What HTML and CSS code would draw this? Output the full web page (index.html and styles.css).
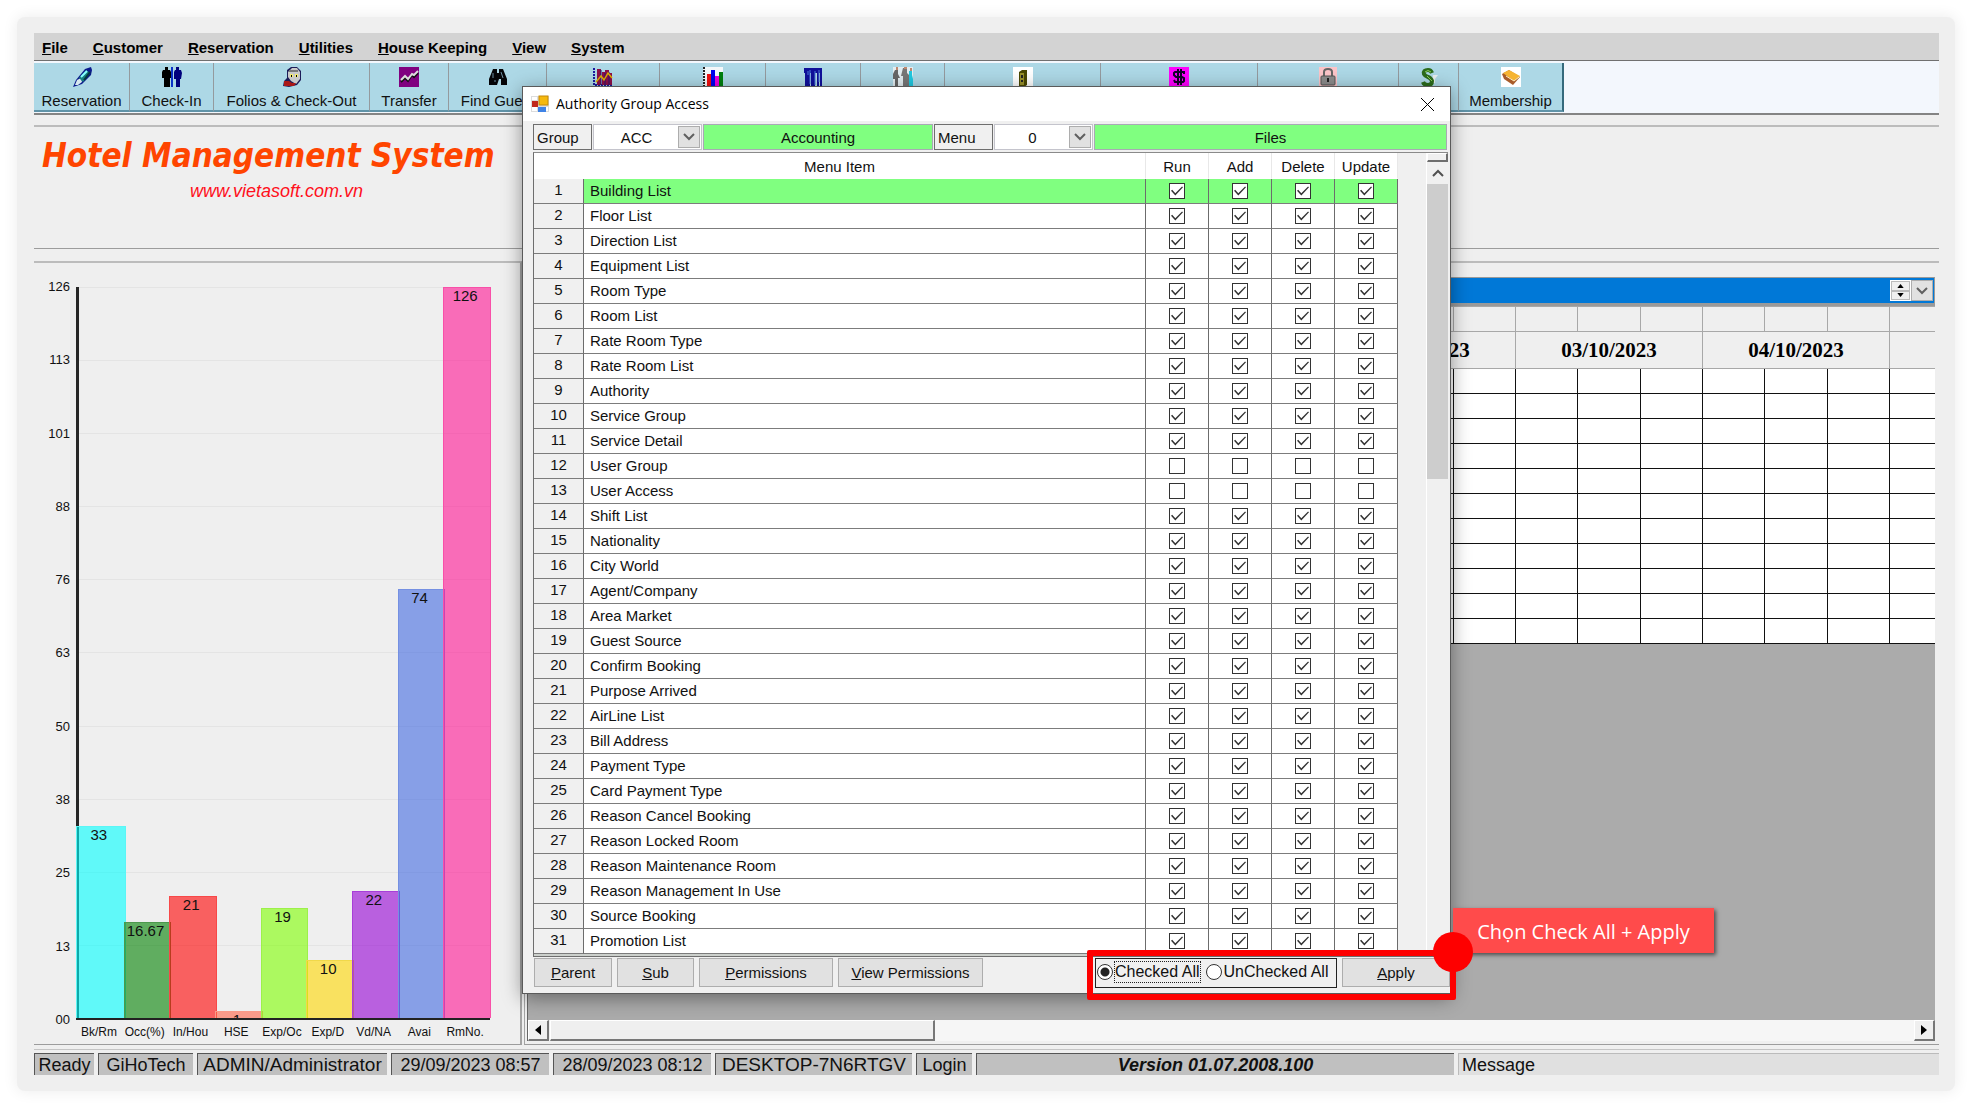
FILE: index.html
```html
<!DOCTYPE html>
<html lang="en">
<head>
<meta charset="utf-8">
<title>Hotel Management System</title>
<link rel="stylesheet" href="styles.css">
</head>
<body>
<div class="frame">
<div class="app">

<nav class="menubar">
  <a href="#"><u>F</u>ile</a>
  <a href="#"><u>C</u>ustomer</a>
  <a href="#"><u>R</u>eservation</a>
  <a href="#"><u>U</u>tilities</a>
  <a href="#"><u>H</u>ouse Keeping</a>
  <a href="#"><u>V</u>iew</a>
  <a href="#"><u>S</u>ystem</a>
</nav>

<div class="toolbar">
  <button type="button" class="tool w96">
    <svg viewBox="0 0 20 20"><path d="M1 20 4 13 13 2 19 0 20 3 19 8 10 17 4 19z" fill="#0a1a8c"/><path d="M3 18 5 13 9 11 10 15 6 18z" fill="#d8e8ee"/><path d="M7 11 14 3 18 6 11 15z" fill="#177f80"/><path d="M9 10 15 4" stroke="#8ff" stroke-width="2"/><path d="M12 13 18 5" stroke="#043a40" stroke-width="2"/></svg>
    Reservation</button>
  <button type="button" class="tool w84">
    <svg viewBox="0 0 20 20"><path d="M3 0h3v3h2l1 2v6H8v9H5v-7 7H2v-9H0V5l1-2h2z" fill="#000"/><path d="M9 0h2v20H9z" fill="#0a32c8"/><path d="M14 0h3v3h2l1 3-1 6h-1v8h-2v-6 6h-2v-8h-2V5l1-2h1z" fill="#00007c"/></svg>
    Check-In</button>
  <button type="button" class="tool w156">
    <svg viewBox="0 0 20 20"><path d="M5 3 9 0h6l4 4v9l-4 5-8 2-6-1 1-5 3-3z" fill="#1c1c58"/><path d="M6 5 10 1h5l3 4v7l-4 5-5-3-3-4z" fill="#c9c9c9"/><path d="M7 4h9" stroke="#777" stroke-width="2"/><path d="M8 7h3v3H8zM13 7h3v3h-3z" fill="#f5ec70"/><path d="M9 8h1v2H9zM14 8h1v2h-1z" fill="#000"/><path d="M2 14h5l3 2h4l-2 3H2z" fill="#a91818"/></svg>
    Folios &amp; Check-Out</button>
  <button type="button" class="tool w79">
    <svg viewBox="0 0 20 20"><path d="M0 0h20v20H0z" fill="#800080"/><path d="M2 15 6 11 9 14 13 8 15 10 19 6" stroke="#111" stroke-width="2" fill="none"/><path d="M2 13 6 9 9 12 13 7 15 8 19 4" stroke="#ddd" stroke-width="2" fill="none"/></svg>
    Transfer</button>
  <button type="button" class="tool w98">
    <svg viewBox="0 0 20 20"><path d="M5 2h4v4h2V2h4l4 10v6h-6v-6h-2l-2 6H1v-6z" fill="#050508"/><path d="M5 6v5M13 5l2 6M7 13v2" stroke="#6c8ea0" stroke-width="1"/></svg>
    Find Guest</button>
  <button type="button" class="tool w113" aria-label="Forecast">
    <svg viewBox="0 0 20 20"><path d="M1 1v17h18" stroke="#1a1aa0" stroke-width="2" stroke-dasharray="2 1" fill="none"/><path d="M4 2h4v16H4zM9 5h3v13H9zM12 3h4v15h-4zM16 6h3v12h-3z" fill="#8c1048"/><path d="M8 3v15M12 6v12M16 5v13" stroke="#2a1470"/><path d="M3 15 8 9l3 4 4-7 4 5" stroke="#e0b000" stroke-width="1.5" fill="none"/></svg></button>
  <button type="button" class="tool w106" aria-label="Statistics">
    <svg viewBox="0 0 20 20"><path d="M0 0h20v20H0z" fill="#f4f8fa"/><path d="M1 0v20" stroke="#222" stroke-width="2" stroke-dasharray="2 1"/><path d="M4 7h4v13H4z" fill="#f01010"/><path d="M8 3h4v17H8z" fill="#0000f0"/><path d="M12 9h4v11h-4z" fill="#f000e0"/><path d="M16 5h4v15h-4z" fill="#008010"/></svg></button>
  <button type="button" class="tool w95" aria-label="Room plan">
    <svg viewBox="0 0 20 20"><path d="M1 1h18v5H1zM2 6h5v13H2zM8 6h4v13H8zM14 6h2v13h-2zM17 5h2v14h-2z" fill="#10109a"/><path d="M5 4v4M7 3v14M12 4v14M16 3v12" stroke="#4b7ad8"/></svg></button>
  <button type="button" class="tool w84" aria-label="Group">
    <svg viewBox="0 0 20 20"><path d="M0 0h20v20H0z" fill="#e4eef2"/><path d="M2 3h3v4l2 4H5v8H2v-7H0V7z" fill="#666"/><path d="M10 1h4v5l2 2v12h-6V9H8z" fill="#777"/><path d="M16 4h3v4l1 4v7h-4z" fill="#20c8e0"/><path d="M3 0h2v3H3zM11 0h3v2h-3zM17 1h2v3h-2z" fill="#c08870"/></svg></button>
  <button type="button" class="tool w156" aria-label="Door lock">
    <svg viewBox="0 0 20 20"><path d="M0 0h20v20H0z" fill="#fff"/><path d="M6 5 9 3h5v15l-3 2H6z" fill="#4a4700"/><path d="M7 6h4v12H7z" fill="#98902a"/><path d="M8 8h2v3H8zM8 13h2v2H8z" fill="#222"/></svg></button>
  <button type="button" class="tool w157" aria-label="Exchange rate">
    <svg viewBox="0 0 20 20"><path d="M0 0h20v20H0z" fill="#f0f"/><path d="M15 7V5H6L5 6v2l2 2h6l2 1v3l-1 1H6l-1-2M9 2v16M12 2v16" stroke="#14002a" stroke-width="2" fill="none"/></svg></button>
  <button type="button" class="tool w141" aria-label="Lock room">
    <svg viewBox="0 0 20 20"><path d="M1 0h18v20H1z" fill="#fcc5c9"/><path d="M6 9V5q0-3 4-3t4 3v4" stroke="#666" stroke-width="2" fill="none"/><rect x="3" y="9" width="14" height="9" rx="1" fill="#8c8c8c" stroke="#555"/><path d="M10 11v4" stroke="#222" stroke-width="2"/></svg></button>
  <button type="button" class="tool w60" aria-label="Cash">
    <svg viewBox="0 0 20 20"><path d="M14 8h5l-3 4v4h-3z" fill="#e8eef0"/><path d="M13 6Q12 3 9 3 4 3 5 7q1 2 4 3t4 4q0 4-4 4-4 0-5-3" stroke="#2c6c1c" stroke-width="4" fill="none"/><path d="M12 5Q9 2 6 5M8 9l5 5" stroke="#8ccf5a" fill="none"/></svg></button>
  <button type="button" class="tool w105">
    <svg viewBox="0 0 20 20"><path d="M0 0h20v20H0z" fill="#fff"/><path d="M1 7 8 3 19 10 12 18 3 12z" fill="#a85c2a"/><path d="M2 6 8 3 19 9 13 14z" fill="#f6b431"/><path d="M5 9 13 14 18 10" stroke="#fff0c0" fill="none"/></svg>
    Membership</button>
</div>

<header class="banner">
  <h1>Hotel Management System</h1>
  <a href="#">www.vietasoft.com.vn</a>
</header>

<main class="panes">
  <section class="pane chart-pane">
    <div class="chart">
      <div class="scale">
        <span>126</span><span>113</span><span>101</span><span>88</span><span>76</span><span>63</span><span>50</span><span>38</span><span>25</span><span>13</span><span>00</span>
      </div>
      <div class="plot">
        <div class="bar cyan" style="height:26.2%">33</div>
        <div class="bar green" style="height:13.2%">16.67</div>
        <div class="bar red" style="height:16.7%">21</div>
        <div class="bar salmon" style="height:0.9%">1</div>
        <div class="bar lime" style="height:15.1%">19</div>
        <div class="bar gold" style="height:8%">10</div>
        <div class="bar violet" style="height:17.4%">22</div>
        <div class="bar blue" style="height:58.7%">74</div>
        <div class="bar pink" style="height:100%">126</div>
      </div>
      <div class="cats">
        <span>Bk/Rm</span><span>Occ(%)</span><span>In/Hou</span><span>HSE</span><span>Exp/Oc</span><span>Exp/D</span><span>Vd/NA</span><span>Avai</span><span>RmNo.</span>
      </div>
    </div>
  </section>

  <section class="pane plan-pane">
    <div class="plan-head">
      <div class="spinner">
        <button type="button" aria-label="Previous"><svg viewBox="0 0 8 5"><path d="M0 5h8L4 0z"/></svg></button>
        <button type="button" aria-label="Next"><svg viewBox="0 0 8 5"><path d="M0 0h8L4 5z"/></svg></button>
      </div>
      <button type="button" class="drop" aria-label="Open list"><svg viewBox="0 0 12 8"><path d="M1 1 6 6 11 1"/></svg></button>
    </div>
    <div class="plan-body">
      <table class="plan">
        <colgroup id="plan-cols"></colgroup>
        <thead id="plan-head"></thead>
        <tbody id="plan-rows"></tbody>
      </table>
    </div>
    <div class="hscroll">
      <button type="button" aria-label="Scroll left"><svg viewBox="0 0 6 10"><path d="M6 0v10L0 5z"/></svg></button>
      <div class="thumb"></div>
      <div class="track"></div>
      <button type="button" aria-label="Scroll right"><svg viewBox="0 0 6 10"><path d="M0 0v10L6 5z"/></svg></button>
    </div>
  </section>
</main>

<footer class="status">
  <div class="s60">Ready</div>
  <div class="s96">GiHoTech</div>
  <div class="s190">ADMIN/Administrator</div>
  <div class="s159">29/09/2023 08:57</div>
  <div class="s159">28/09/2023 08:12</div>
  <div class="s197">DESKTOP-7N6RTGV</div>
  <div class="s56">Login</div>
  <div class="version">Version 01.07.2008.100</div>
  <div class="message">Message</div>
</footer>

<div class="dialog" role="dialog" aria-label="Authority Group Access">
  <div class="titlebar">
    <svg class="formicon" viewBox="0 0 18 18"><path d="M0 1h18v16H0z" fill="#dcdcdc"/><path d="M1 2h5v3H1zM1 12h5v4H1zM15 12h2v4h-2z" fill="#fff"/><rect x="1" y="6" width="6" height="6" fill="#c0281c"/><rect x="8" y="1" width="9" height="9" fill="#f5b90f" stroke="#c58a08"/><rect x="7" y="12" width="8" height="5" fill="#3f83e6"/></svg>
    <h2>Authority Group Access</h2>
    <button type="button" class="close" aria-label="Close"><svg viewBox="0 0 13 13"><path d="M0 0 13 13M13 0 0 13"/></svg></button>
  </div>

  <div class="filters">
    <label for="grp" class="tag">Group</label>
    <div class="combo c108">
      <select id="grp"><option>ACC</option></select>
      <span class="drop"><svg viewBox="0 0 12 8"><path d="M1 1 6 6 11 1"/></svg></span>
    </div>
    <output class="name c230">Accounting</output>
    <label for="mnu" class="tag">Menu</label>
    <div class="combo c98">
      <select id="mnu"><option>0</option></select>
      <span class="drop"><svg viewBox="0 0 12 8"><path d="M1 1 6 6 11 1"/></svg></span>
    </div>
    <output class="name grow">Files</output>
  </div>

  <div class="listing">
    <div class="listing-table">
      <table class="rights">
        <colgroup><col class="num"><col><col class="flag"><col class="flag"><col class="flag"><col class="flag"></colgroup>
        <thead><tr><th colspan="2">Menu Item</th><th>Run</th><th>Add</th><th>Delete</th><th>Update</th></tr></thead>
        <tbody id="rights"></tbody>
      </table>
    </div>
    <div class="vscroll">
      <div class="split"></div>
      <svg viewBox="0 0 12 8"><path d="M1 7 6 2 11 7"/></svg>
      <div class="vthumb"></div>
    </div>
  </div>

  <div class="actions">
    <button type="button" class="b78"><span><u>P</u>arent</span></button>
    <button type="button" class="b77"><span><u>S</u>ub</span></button>
    <button type="button" class="b134"><span><u>P</u>ermissions</span></button>
    <button type="button" class="b145"><span><u>V</u>iew Permissions</span></button>
    <fieldset class="radios">
      <label><input type="radio" name="all" checked><span class="focus">Checked All</span></label>
      <label><input type="radio" name="all"><span>UnChecked All</span></label>
    </fieldset>
    <button type="button" class="b108"><span><u>A</u>pply</span></button>
  </div>

  <div class="callout">Chọn Check All + Apply</div>
  <div class="mark"></div>
  <div class="dot"></div>
</div>

</div>
</div>
<script src="app.js"></script>
</body>
</html>
```
FILE: styles.css
```css
* { box-sizing: border-box; }

body {
  margin: 0;
  min-height: 100vh;
  display: flex;
  padding: 17px;
  background: #fff;
  color: #111;
  font: 15px/20px "Liberation Sans", Arial, sans-serif;
}

button, select, input { font: inherit; color: inherit; margin: 0; }
button { padding: 0; }
svg { display: block; }

.frame {
  flex: 1;
  min-width: 0;
  display: flex;
  padding: 16px 16px 16px 17px;
  border-radius: 8px;
  background: #efefef;
  box-shadow: 0 0 14px 2px #f0f0f0;
}

.app {
  position: relative;
  flex: 1;
  min-width: 0;
  display: flex;
  flex-direction: column;
}

/* menu and toolbar */
.menubar {
  display: flex;
  gap: 25px;
  height: 28px;
  padding: 5px 8px;
  background: #d3d3d3;
  border-bottom: 1px solid #707070;
}
.menubar a { color: #000; font-weight: bold; text-decoration: none; }

.toolbar {
  display: flex;
  height: 54px;
  padding: 2px 0 1px;
  overflow: hidden;
  background: #f3f7fd;
  border-bottom: 2px solid #848484;
}
.tool {
  flex: none;
  display: flex;
  flex-direction: column;
  align-items: center;
  gap: 4px;
  padding: 4px 0 0;
  border: 0;
  border-right: 1px solid #949a9e;
  border-bottom: 2px solid #5f93a8;
  background: #add8e6;
  white-space: nowrap;
}
.tool:last-child { border-right: 2px solid #356a7c; }
.tool svg { width: 20px; height: 20px; flex: none; }
.w60 { width: 60px; } .w79 { width: 79px; } .w84 { width: 84px; } .w95 { width: 95px; }
.w96 { width: 96px; } .w98 { width: 98px; } .w105 { width: 105px; } .w106 { width: 106px; }
.w113 { width: 113px; } .w141 { width: 141px; } .w156 { width: 156px; } .w157 { width: 157px; }

/* banner */
.banner {
  height: 124px;
  margin: 10px 0 12px;
  padding-top: 9px;
  border-top: 2px solid #bcbcbc;
  border-bottom: 1px solid #9c9c9c;
}
.banner h1 {
  margin: 0;
  padding-left: 8px;
  color: #ff4500;
  font: italic bold 33px/40px "DejaVu Sans Condensed", "DejaVu Sans", sans-serif;
}
.banner a {
  display: block;
  padding: 3px 0 0 156px;
  color: #ff1020;
  font-style: italic;
  font-size: 18px;
  line-height: 24px;
  text-decoration: none;
}

/* panes */
.panes { flex: 1; display: flex; gap: 2px; min-width: 0; }
.pane { border-top: 2px solid #bcbcbc; border-bottom: 1px solid #9c9c9c; }

.chart-pane {
  flex: none;
  width: 488px;
  display: flex;
  border-right: 2px solid #a4a4a4;
}
.chart {
  flex: 1;
  display: grid;
  grid-template: 1fr 24px / 42px 1fr;
  padding: 24px 30px 0 0;
}
.scale {
  display: flex;
  flex-direction: column;
  justify-content: space-between;
  margin: -10px 0;
  padding-right: 6px;
  text-align: right;
  font-size: 13px;
}
.plot {
  display: grid;
  grid-template-columns: repeat(9, 1fr);
  align-items: end;
  border-left: 3px solid #262626;
  border-bottom: 2px solid #222;
  background: repeating-linear-gradient(#e4e4e4 0 1px, transparent 1px 10%);
}
.bar { margin: 0 -1px; padding-right: 4px; overflow: hidden; text-align: center; line-height: 16px; border: 1px solid; border-bottom: 0; }
.bar:first-child { margin-left: -3px; }
.cyan { background: rgb(0 255 255 / 60%); border-color: #5af6f6; }
.green { background: rgb(0 128 0 / 60%); border-color: #4d984d; }
.red { background: rgb(255 0 0 / 60%); border-color: #f84848; }
.salmon { background: rgb(255 98 70 / 60%); border-color: #f99a88; }
.lime { background: rgb(127 255 0 / 60%); border-color: #9df04a; }
.gold { background: rgb(255 215 0 / 60%); border-color: #f0d84a; }
.violet { background: rgb(148 0 211 / 60%); border-color: #a73fd8; }
.blue { background: rgb(65 105 225 / 60%); border-color: #7590e2; }
.pink { background: rgb(255 20 147 / 60%); border-color: #f850a8; }
.cats {
  grid-column: 2;
  display: grid;
  grid-template-columns: repeat(9, 1fr);
  padding: 2px 2px 0 0;
  text-align: center;
  font-size: 12px;
}

.plan-pane {
  flex: 1;
  min-width: 0;
  display: flex;
  flex-direction: column;
  padding: 14px 4px 3px 2px;
  border-left: 1px solid #a4a4a4;
}
.plan-head {
  display: flex;
  justify-content: flex-end;
  height: 29px;
  padding: 2px 1px;
  background: #0078d7;
  border: 1px solid #9a9a9a;
  border-bottom-width: 3px;
}
.spinner { display: flex; flex-direction: column; width: 21px; background: #fff; padding: 1px; }
.spinner button {
  flex: 1;
  display: flex;
  align-items: center;
  justify-content: center;
  border: 1px solid #bbb;
  background: #efefef;
}
.spinner svg { width: 7px; height: 4px; }
.drop {
  display: flex;
  align-items: center;
  justify-content: center;
  width: 22px;
  border: 1px solid #adadad;
  background: #e1e1e1;
}
.drop svg { width: 12px; height: 8px; fill: none; stroke: #606060; stroke-width: 2; }
.plan-body { flex: 1; min-height: 0; overflow: hidden; background: #ababab; border-left: 1px solid #666; }
.plan { width: 1548px; table-layout: fixed; border-collapse: collapse; }
.plan th { height: 25px; padding: 0; background: #efefef; border: 1px solid #a8a8a8; }
.plan .dates th { height: 37px; font: bold 21px/24px "Liberation Serif", "Times New Roman", serif; color: #000; }
.plan .dates .sun { color: #ff8c00; }
.plan td { height: 25px; padding: 0; background: #fff; border: 1px solid #111; }
.hscroll { display: flex; height: 21px; border-left: 1px solid #666; }
.hscroll button {
  width: 21px;
  display: flex;
  align-items: center;
  justify-content: center;
  background: #efefef;
  border: 1px solid #fff;
  border-right: 2px solid #777;
  border-bottom: 2px solid #777;
}
.hscroll svg { width: 6px; height: 10px; }
.thumb { flex: none; width: 385px; margin-left: 1px; background: #efefef; border: 1px solid #fff; border-right: 2px solid #777; border-bottom: 2px solid #777; }
.track { flex: 1; background: #f6f6f6; }

/* status bar */
.status {
  display: flex;
  gap: 4px;
  height: 30px;
  padding-top: 8px;
  background: linear-gradient(#efefef 0 4px, #c4c4c4 4px 5px, #efefef 5px);
  font-size: 18px;
  line-height: 22px;
}
.status div {
  flex: none;
  height: 22px;
  overflow: hidden;
  white-space: nowrap;
  text-align: center;
  background: #c0c0c0;
  border-top: 1px solid #555;
  border-left: 1px solid #555;
}
.status .s56 { width: 56px; }
.status .s60 { width: 60px; }
.status .s96 { width: 95px; }
.status .s159 { width: 158px; }
.status .s190 { width: 190px; font-size: 19px; }
.status .s197 { width: 197px; font-size: 19px; }
.status .version { flex: 1; font-weight: bold; font-style: italic; }
.status .message { flex: 1; padding-left: 3px; text-align: left; background: #e0e0e0; border-color: #bbb; }

/* dialog window */
.dialog {
  position: absolute;
  left: 488px;
  top: 53px;
  width: 929px;
  padding-bottom: 6px;
  background: #f0f0f0;
  border: 1px solid #5a5a5a;
  box-shadow: 0 4px 18px rgb(0 0 0 / 40%);
}
.titlebar {
  display: flex;
  align-items: center;
  height: 34px;
  padding: 0 16px 0 8px;
  background: #fff;
}
.formicon { width: 18px; height: 18px; }
.titlebar h2 { flex: 1; margin: 0 0 0 7px; font: 14px/20px "Open Sans", "Noto Sans", sans-serif; color: #000; }
.close { border: 0; background: none; }
.close svg { width: 13px; height: 13px; stroke: #000; stroke-width: 1; }

.filters { display: flex; gap: 1px; padding: 3px 3px 2px 10px; height: 31px; }
.tag { width: 59px; padding: 3px 3px 0; border: 1px solid #6e6e6e; }
.combo { display: flex; padding: 1px; background: #fff; border: 1px solid #c4c4cc; }
.combo select { flex: 1; min-width: 0; appearance: none; border: 0; padding: 2px 0 0; background: none; text-align: center; text-align-last: center; }
.name { display: block; padding: 3px 2px 0; text-align: center; background: #80ff80; border: 1px solid #a9a9b5; }
.c98 { width: 99px; } .c108 { width: 109px; } .c230 { width: 230px; } .grow { flex: 1; }

.listing {
  display: flex;
  justify-content: space-between;
  height: 805px;
  margin: 0 2px 0 10px;
  overflow: hidden;
  border: 1px solid #6e6e6e;
  border-top-color: #8a8a8a;
  border-right: 0;
}
.listing-table { background: #ccd0cc; width: 864px; }
.rights { width: 100%; table-layout: fixed; border-collapse: separate; border-spacing: 0; }
.rights th, .rights td { height: 25px; padding: 0 0 2px; border: 0; border-bottom: 1px solid #7c7c7c; border-right: 1px solid #6c6c6c; }
.rights td { padding: 0 0 0 6px; background: #fff; }
.rights td.flag { padding: 0; }
.rights th { font-weight: normal; background: #f0f0f0; }
.rights thead th { height: 26px; padding: 2px 0 0; background: #fff; border-bottom-color: #fff; border-right-color: #e8e8e8; }
.rights .num { width: 50px; }
.rights .flag { width: 63px; }
.rights .picked td { background: #80ff80; }
.rights input {
  appearance: none;
  display: block;
  width: 16px;
  height: 16px;
  margin: 0 auto;
  background: #fff;
  border: 1px solid #333;
}
.rights input:checked::before {
  content: "";
  display: block;
  width: 12px;
  height: 10px;
  margin: 2px 1px;
  background: #333;
  clip-path: polygon(0 48%, 10% 38%, 36% 72%, 92% 4%, 100% 12%, 36% 96%);
}
.vscroll { width: 22px; display: flex; flex-direction: column; align-items: center; border-left: 1px solid #fff; }
.vscroll svg { width: 12px; height: 8px; margin: 7px 0; fill: none; stroke: #505050; stroke-width: 2; }
.split { align-self: stretch; height: 9px; border: 1px solid #fff; border-right: 2px solid #6e6e6e; border-bottom: 2px solid #6e6e6e; background: #f0f0f0; }
.vthumb { align-self: stretch; height: 295px; background: #cdcdcd; }

.actions { display: flex; gap: 5px; height: 30px; padding: 1px 0 0 11px; }
.actions button { height: 29px; padding-top: 1px; background: #e1e1e1; border: 1px solid #adadad; }
.b77 { width: 77px; } .b78 { width: 78px; } .b108 { width: 108px; } .b134 { width: 134px; } .b145 { width: 145px; }
.radios {
  display: flex;
  gap: 6px;
  width: 242px;
  height: 30px;
  margin: 0 0 0 auto;
  padding: 3px 1px;
  border: 1px solid #222;
  font-size: 16px;
}
.radios label { display: flex; align-items: center; gap: 2px; height: 20px; white-space: nowrap; }
.radios input {
  appearance: none;
  width: 16px;
  height: 16px;
  border: 1px solid #333;
  border-radius: 50%;
  background: #fff;
}
.radios input:checked { background: radial-gradient(#222 0 4px, #fff 5px); }
.focus { outline: 1px dotted #222; }

/* annotations */
.mark {
  position: absolute;
  right: -6px;
  bottom: -7px;
  width: 369px;
  height: 50px;
  border: 6px solid #fe0000;
  border-radius: 2px;
}
.dot {
  position: absolute;
  right: -23px;
  bottom: 21px;
  width: 40px;
  height: 40px;
  border-radius: 50%;
  background: #fe0000;
}
.callout {
  position: absolute;
  left: 930px;
  bottom: 40px;
  width: 261px;
  height: 45px;
  text-align: center;
  white-space: nowrap;
  color: #fff;
  background: #ff4b4b;
  box-shadow: 2px 2px 4px rgb(0 0 0 / 55%);
  font: 20px/48px "Open Sans", "Noto Sans", sans-serif;
}
```
FILE: app.js
```js
const items = ["Building List", "Floor List", "Direction List", "Equipment List", "Room Type", "Room List",
  "Rate Room Type", "Rate Room List", "Authority", "Service Group", "Service Detail", "User Group", "User Access",
  "Shift List", "Nationality", "City World", "Agent/Company", "Area Market", "Guest Source", "Confirm Booking",
  "Purpose Arrived", "AirLine List", "Bill Address", "Payment Type", "Card Payment Type", "Reason Cancel Booking",
  "Reason Locked Room", "Reason Maintenance Room", "Reason Management In Use", "Source Booking", "Promotion List"];
const denied = ["User Group", "User Access"];
const flags = ["Run", "Add", "Delete", "Update"];

document.getElementById("rights").innerHTML = items.map((item, i) => {
  const state = denied.includes(item) ? "" : " checked";
  const cells = flags.map(f => `<td class="flag"><input type="checkbox" aria-label="${f} ${item}"${state}></td>`).join("");
  return `<tr${i === 0 ? ' class="picked"' : ""}><th scope="row">${i + 1}</th><td>${item}</td>${cells}</tr>`;
}).join("");

// room plan: one room column, then three parts for each day
const days = ["", "", "", "", "02/10/2023", "03/10/2023", "04/10/2023", "05/10/2023"];
const parts = days.length * 3;
document.getElementById("plan-cols").innerHTML =
  '<col style="width:52px">' + days.map(() => '<col style="width:62px"><col style="width:63px"><col style="width:62px">').join("");
document.getElementById("plan-head").innerHTML =
  "<tr>" + "<th></th>".repeat(parts + 1) + "</tr>" +
  '<tr class="dates"><th></th>' + days.map((d, i) => `<th colspan="3"${i === 7 ? ' class="sun"' : ""}>${d}</th>`).join("") + "</tr>";
document.getElementById("plan-rows").innerHTML =
  ("<tr>" + "<td></td>".repeat(parts + 1) + "</tr>").repeat(11);
```
